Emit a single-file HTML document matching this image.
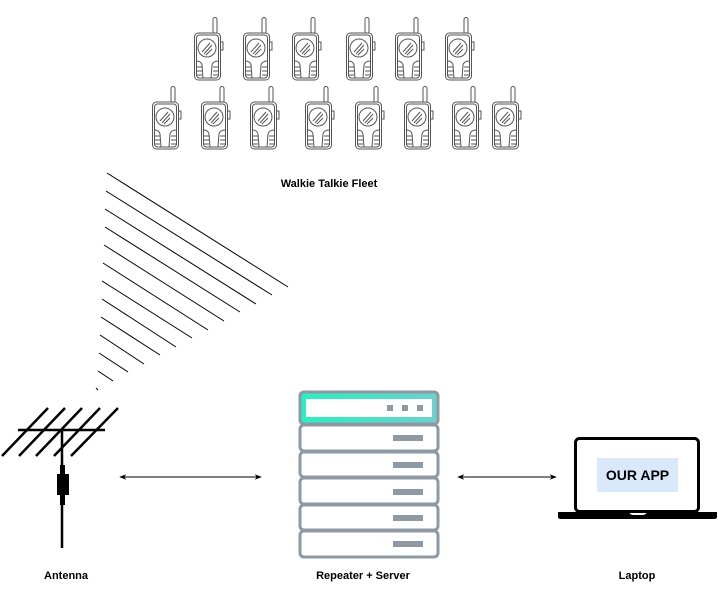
<!DOCTYPE html>
<html><head><style>
body{margin:0;background:#fff;width:718px;height:590px;overflow:hidden;font-family:"Liberation Sans",sans-serif;}
</style></head><body>
<svg width="718" height="590" viewBox="0 0 718 590" xmlns="http://www.w3.org/2000/svg">
<defs>
<g id="wt" fill="none" stroke="#555" stroke-width="1">
<rect x="19" y="0.5" width="4" height="16" rx="2" fill="#fff"/>
<rect x="26" y="25" width="3" height="8" fill="#fff"/>
<rect x="0.5" y="16" width="26" height="47" rx="4" fill="#fff"/>
<rect x="2.5" y="18" width="22" height="43" rx="3"/>
<circle cx="13" cy="31" r="9"/>
<path d="M8 35 L16 26 M10 37 L18 28 M12 38 L18 32"/>
<path d="M2.5 44 Q7 44 8 48 L9 61 M24.5 44 Q19 44 18 48 L17 61 M3 50h5 M3 54h5 M3 58h5 M19 50h5 M19 54h5 M19 58h5"/>
</g>
<linearGradient id="tg" x1="0" x2="1"><stop offset="0" stop-color="#2af0c0"/><stop offset="1" stop-color="#6fd0cd"/></linearGradient>
<marker id="ah" viewBox="0 0 10 10" refX="9" refY="5" markerWidth="7" markerHeight="7" orient="auto-start-reverse"><path d="M0 1 L10 5 L0 9 L3 5z" fill="#000"/></marker>
</defs>
<use href="#wt" x="194" y="17"/><use href="#wt" x="243" y="17"/><use href="#wt" x="292" y="17"/><use href="#wt" x="346" y="17"/><use href="#wt" x="395" y="17"/><use href="#wt" x="445" y="17"/>
<use href="#wt" x="152" y="86"/><use href="#wt" x="201" y="86"/><use href="#wt" x="250" y="86"/><use href="#wt" x="305" y="86"/><use href="#wt" x="355" y="86"/><use href="#wt" x="404" y="86"/><use href="#wt" x="452" y="86"/><use href="#wt" x="492" y="86"/>
<text x="329" y="187" font-size="11" font-weight="bold" text-anchor="middle">Walkie Talkie Fleet</text>
<g stroke="#000" stroke-width="1">
<line x1="107" y1="173" x2="288" y2="287"/>
<line x1="106" y1="191" x2="272" y2="295"/>
<line x1="105" y1="209" x2="256" y2="304"/>
<line x1="105" y1="227" x2="240" y2="312"/>
<line x1="104" y1="245" x2="224" y2="321"/>
<line x1="103" y1="263" x2="208" y2="330"/>
<line x1="102" y1="281" x2="192" y2="338"/>
<line x1="102" y1="299" x2="176" y2="347"/>
<line x1="101" y1="317" x2="160" y2="355"/>
<line x1="100" y1="335" x2="144" y2="364"/>
<line x1="99" y1="353" x2="128" y2="372"/>
<line x1="98" y1="371" x2="113" y2="381"/>
<line x1="96" y1="388" x2="98" y2="390"/>
</g>
<g stroke="#000" stroke-width="2.5">
<line x1="18" y1="430" x2="105" y2="430"/>
<line x1="2" y1="456" x2="48" y2="408"/>
<line x1="19" y1="456" x2="65" y2="408"/>
<line x1="36" y1="456" x2="82" y2="408"/>
<line x1="54" y1="456" x2="100" y2="408"/>
<line x1="71" y1="456" x2="118" y2="408"/>
<line x1="62" y1="430" x2="62" y2="548"/>
</g>
<rect x="60" y="465" width="5" height="40" fill="#000"/>
<rect x="57" y="474" width="12" height="21" fill="#000"/>
<line x1="120" y1="477" x2="261" y2="477" stroke="#000" marker-start="url(#ah)" marker-end="url(#ah)"/>
<line x1="458" y1="477" x2="556" y2="477" stroke="#000" marker-start="url(#ah)" marker-end="url(#ah)"/>
<g stroke="#8e99a3" stroke-width="3" fill="#fff">
<rect x="300" y="392" width="138" height="32" rx="4" fill="url(#tg)"/>
<rect x="300" y="425" width="138" height="26" rx="4"/>
<rect x="300" y="452" width="138" height="25" rx="4"/>
<rect x="300" y="478" width="138" height="26" rx="4"/>
<rect x="300" y="505" width="138" height="25" rx="4"/>
<rect x="300" y="531" width="138" height="26" rx="4"/>
</g>
<rect x="306" y="399" width="126" height="18" fill="#fff"/>
<g fill="#8e99a3">
<rect x="387" y="405" width="6" height="6"/><rect x="402" y="405" width="6" height="6"/><rect x="417" y="405" width="6" height="6"/>
<rect x="393" y="435" width="30" height="6"/><rect x="393" y="462" width="30" height="6"/><rect x="393" y="489" width="30" height="6"/><rect x="393" y="515" width="30" height="6"/><rect x="393" y="541" width="30" height="6"/>
</g>
<rect x="575.5" y="438.5" width="123" height="73" rx="4" fill="#fff" stroke="#000" stroke-width="3"/>
<rect x="597" y="458" width="81" height="34" fill="#dae8fc"/>
<text x="637.5" y="480" font-size="14" font-weight="bold" text-anchor="middle">OUR APP</text>
<path d="M558 512 H629 Q630 515 634 515 H642 Q646 515 647 512 H717 V517 Q717 519 714 519 H561 Q558 519 558 517 Z" fill="#000"/>
<g font-size="11" font-weight="bold" text-anchor="middle">
<text x="66" y="579">Antenna</text>
<text x="363" y="579">Repeater + Server</text>
<text x="637" y="579">Laptop</text>
</g>
</svg>
</body></html>
